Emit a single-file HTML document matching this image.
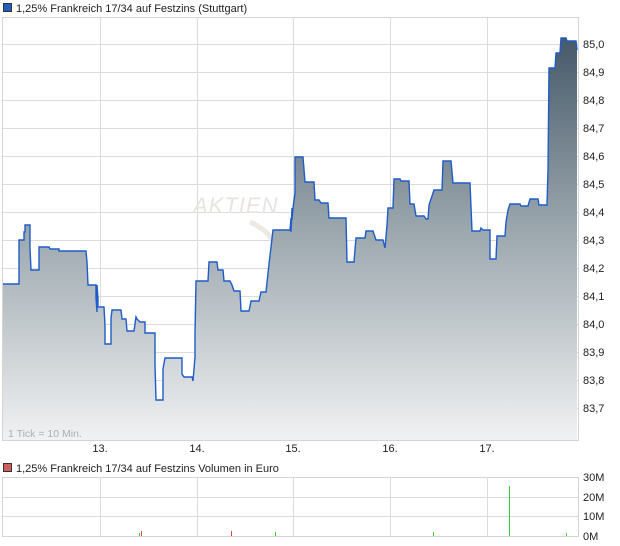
<!DOCTYPE html>
<html><head><meta charset="utf-8"><style>
html,body{margin:0;padding:0;background:#fff;width:620px;height:546px;overflow:hidden}
svg{display:block;font-family:"Liberation Sans",sans-serif}
</style></head><body>
<svg width="620" height="546" viewBox="0 0 620 546">
<defs>
<linearGradient id="g" x1="0" y1="38" x2="0" y2="441" gradientUnits="userSpaceOnUse">
<stop offset="0" stop-color="#46596a"/>
<stop offset="0.45" stop-color="#97a3aa"/>
<stop offset="1" stop-color="#f1f2f3"/>
</linearGradient>
</defs>
<rect x="3.5" y="3.5" width="8" height="8" fill="#1f5fbf" stroke="#333" stroke-width="1"/>
<text x="16" y="12" font-size="11" fill="#222">1,25% Frankreich 17/34 auf Festzins (Stuttgart)</text>
<g stroke="#dcdcdc" stroke-width="1">
<line x1="2" y1="44.5" x2="578" y2="44.5"/><line x1="2" y1="72.5" x2="578" y2="72.5"/>
<line x1="2" y1="100.5" x2="578" y2="100.5"/><line x1="2" y1="128.5" x2="578" y2="128.5"/>
<line x1="2" y1="156.5" x2="578" y2="156.5"/><line x1="2" y1="184.5" x2="578" y2="184.5"/>
<line x1="2" y1="212.5" x2="578" y2="212.5"/><line x1="2" y1="240.5" x2="578" y2="240.5"/>
<line x1="2" y1="268.5" x2="578" y2="268.5"/><line x1="2" y1="296.5" x2="578" y2="296.5"/>
<line x1="2" y1="324.5" x2="578" y2="324.5"/><line x1="2" y1="352.5" x2="578" y2="352.5"/>
<line x1="2" y1="380.5" x2="578" y2="380.5"/><line x1="2" y1="408.5" x2="578" y2="408.5"/>
<line x1="100.5" y1="17" x2="100.5" y2="441"/><line x1="197.5" y1="17" x2="197.5" y2="441"/>
<line x1="293.5" y1="17" x2="293.5" y2="441"/><line x1="390.5" y1="17" x2="390.5" y2="441"/>
<line x1="487.5" y1="17" x2="487.5" y2="441"/>
</g>
<rect x="2.5" y="17.5" width="576" height="423" fill="none" stroke="#d4d4d4"/>
<text x="193" y="213" font-size="22" font-style="italic" fill="#e8e4df" letter-spacing="1">AKTIEN</text>
<path d="M250 222 Q268 230 275 244" stroke="#ece8e2" stroke-width="5" fill="none"/>
<path d="M3 284 H19 V240 H24 V232 H25 V225 H30 V248 L31 270 H39 V247 H49 L50 249 H59 V251 H86 L87 262 L88 285 H96 V298 L97 312 V285 L98 298 V307 H104 L105 326 V344 H111 V318 L112 310 H121 L122 319 H126 L127 331 H134 L136 317 L137 319 L140 322 H145 V333 H155 V365 L156 400 H163 V369 L165 358 H182 V374 L184 377 H192 L193 381 L195 357 V333 L196 281 H208 L209 262 H217 L218 270 H223 L224 281 H230 L232 285 L234 291 H240 L241 311 H249 L251 301 H259 L261 292 H266 L269 264 L273 230 H290 L291 218 L293 208 L295 193 V157 H303 L305 182 H314 L315 200 H319 L321 203 H328 L329 218 H346 L347 262 H354 L356 238 H365 L366 231 H373 L376 240 H383 L385 248 L387 225 L388 208 H393 L394 179 H400 L401 181 H409 L410 204 H414 L416 216 H424 L426 219 H428 L429 205 L432 196 L434 190 H442 L443 161 H451 L453 183 H470 L472 231 H480 L481 228 L483 230 H490 V259 H496 L497 236 H505 L506 222 L508 210 L510 204 H520 L521 206 H528 L530 199 H538 L539 205 H547 L548 170 L549 68 H555 L556 53 H560 L561 38 H566 L567 41 H576 L577 50 V440 H3 Z" fill="url(#g)"/>
<path fill="none" stroke="#1f5cc8" stroke-width="1.4" d="M3 284 H19 V240 H24 V232 H25 V225 H30 V248 L31 270 H39 V247 H49 L50 249 H59 V251 H86 L87 262 L88 285 H96 V298 L97 312 V285 L98 298 V307 H104 L105 326 V344 H111 V318 L112 310 H121 L122 319 H126 L127 331 H134 L136 317 L137 319 L140 322 H145 V333 H155 V365 L156 400 H163 V369 L165 358 H182 V374 L184 377 H192 L193 381 L195 357 V333 L196 281 H208 L209 262 H217 L218 270 H223 L224 281 H230 L232 285 L234 291 H240 L241 311 H249 L251 301 H259 L261 292 H266 L269 264 L273 230 H290 L291 218 V232 L292 208 V220 L293 208 L295 193 V157 H303 L305 182 H314 L315 200 H319 L321 203 H328 L329 218 H346 L347 262 H354 L356 238 H365 L366 231 H373 L376 240 H383 L385 248 L387 225 L388 208 H393 L394 179 H400 L401 181 H409 L410 204 H414 L416 216 H424 L426 219 H428 L429 205 L432 196 L434 190 H442 L443 161 H451 L453 183 H470 L472 231 H480 L481 228 L483 230 H490 V259 H496 L497 236 H505 L506 222 L508 210 L510 204 H520 L521 206 H528 L530 199 H538 L539 205 H547 L548 170 L549 68 H555 L556 53 H560 L561 38 H566 L567 41 H576 L577 50"/>
<text x="8" y="437" font-size="10.5" fill="#aab0b6">1 Tick = 10 Min.</text>
<g font-size="11" fill="#222">
<text x="583" y="48">85,0</text><text x="583" y="76">84,9</text><text x="583" y="104">84,8</text>
<text x="583" y="132">84,7</text><text x="583" y="160">84,6</text><text x="583" y="188">84,5</text>
<text x="583" y="216">84,4</text><text x="583" y="244">84,3</text><text x="583" y="272">84,2</text>
<text x="583" y="300">84,1</text><text x="583" y="328">84,0</text><text x="583" y="356">83,9</text>
<text x="583" y="384">83,8</text><text x="583" y="412">83,7</text>
</g>
<g font-size="11" fill="#222" text-anchor="middle">
<text x="100" y="452">13.</text><text x="197" y="452">14.</text><text x="293" y="452">15.</text>
<text x="390" y="452">16.</text><text x="487" y="452">17.</text>
</g>
<rect x="3.5" y="463.5" width="8" height="8" fill="#d06060" stroke="#333"/>
<text x="16" y="472" font-size="11" fill="#222">1,25% Frankreich 17/34 auf Festzins Volumen in Euro</text>
<g stroke="#dcdcdc">
<line x1="2" y1="497.5" x2="578" y2="497.5"/><line x1="2" y1="516.5" x2="578" y2="516.5"/>
<line x1="100.5" y1="477" x2="100.5" y2="536"/><line x1="197.5" y1="477" x2="197.5" y2="536"/>
<line x1="293.5" y1="477" x2="293.5" y2="536"/><line x1="390.5" y1="477" x2="390.5" y2="536"/>
<line x1="487.5" y1="477" x2="487.5" y2="536"/>
</g>
<rect x="2.5" y="477.5" width="576" height="59" fill="none" stroke="#d4d4d4"/>
<g>
<rect x="139" y="533" width="1" height="3" fill="#3c3"/>
<rect x="141" y="531" width="1" height="5" fill="#d44"/>
<rect x="231" y="531" width="1" height="5" fill="#d44"/>
<rect x="275" y="532" width="1" height="4" fill="#3c3"/>
<rect x="433" y="532" width="1" height="4" fill="#3c3"/>
<rect x="509" y="486" width="1" height="50" fill="#3c3"/>
<rect x="566" y="533" width="1" height="3" fill="#3c3"/>
</g>
<g font-size="11" fill="#222">
<text x="583" y="481">30M</text><text x="583" y="501">20M</text><text x="583" y="520">10M</text><text x="583" y="540">0M</text>
</g>
</svg>
</body></html>
